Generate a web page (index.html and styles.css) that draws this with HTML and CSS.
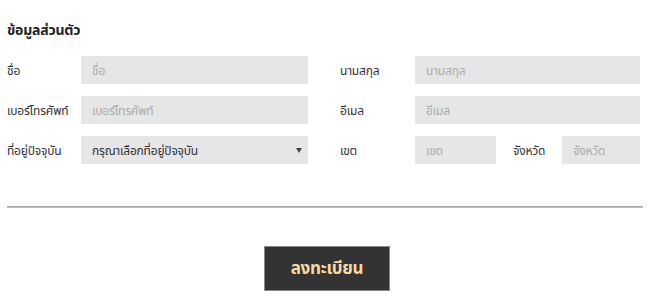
FILE: index.html
```html
<!DOCTYPE html>
<html lang="th">
<head>
<meta charset="utf-8">
<link rel="stylesheet" href="styles.css">
</head>
<body>
<div class="page">
  <h2 class="title">ข้อมูลส่วนตัว</h2>
  <div class="form">
    <label class="lbl">ชื่อ</label>
    <div class="field">ชื่อ</div>
    <label class="lbl">นามสกุล</label>
    <div class="field">นามสกุล</div>

    <label class="lbl">เบอร์โทรศัพท์</label>
    <div class="field">เบอร์โทรศัพท์</div>
    <label class="lbl">อีเมล</label>
    <div class="field">อีเมล</div>

    <label class="lbl">ที่อยู่ปัจจุบัน</label>
    <div class="field select"><span>กรุณาเลือกที่อยู่ปัจจุบัน</span><span class="arrow"></span></div>
    <label class="lbl">เขต</label>
    <div class="split">
      <div class="field small">เขต</div>
      <label class="lbl lbl2">จังหวัด</label>
      <div class="field small2">จังหวัด</div>
    </div>
  </div>
  <hr class="rule">
  <div class="actions"><button class="btn">ลงทะเบียน</button></div>
</div>
</body>
</html>
```
FILE: styles.css
```css
* { box-sizing: border-box; }
html, body { margin: 0; padding: 0; background: #fff; }
body { font-family: "Noto Sans Thai", "Noto Sans Thai UI", "Noto Sans", "DejaVu Sans", sans-serif; color: #333; }
.page { padding: 0 7px; }
.title { margin: 0; padding-top: 21px; height: 56px; font-size: 14px; font-weight: bold; color: #222; line-height: 20px; letter-spacing: -0.2px; }
.form { display: grid; grid-template-columns: 74px 227px 107px 225px; row-gap: 12px; }
.form > .lbl:nth-child(4n+3) { margin-left: 32px; }
.lbl { font-size: 12px; line-height: 30px; height: 28px; color: #333; white-space: nowrap; letter-spacing: -0.2px; }
.field { height: 28px; background: #e6e6e6; color: #aaa; font-size: 12px; line-height: 30px; padding-left: 11px; white-space: nowrap; overflow: hidden; letter-spacing: -0.2px; }
.select { display: flex; justify-content: space-between; align-items: center; color: #333; padding-left: 11px; padding-right: 5px; }
.select span:first-child { padding-top: 2px; }
.arrow { width: 0; height: 0; border-left: 3px solid transparent; border-right: 3px solid transparent; border-top: 5px solid #444; margin-right: 1px; }
.split { display: flex; }
.small { width: 81px; }
.lbl2 { width: 66px; padding-left: 17px; }
.small2 { width: 78px; }
.rule { margin: 42px 0 0; border: 0; height: 2px; background: #bdbdbd; border-top: 1px solid #aaa; }
.actions { display: flex; justify-content: center; padding-top: 38px; padding-left: 4px; }
.btn { width: 126px; height: 45px; background: #333; border: 1px solid #888; color: #f9d8a0; font-family: inherit; font-size: 17px; font-weight: bold; letter-spacing: -0.3px; }
```
